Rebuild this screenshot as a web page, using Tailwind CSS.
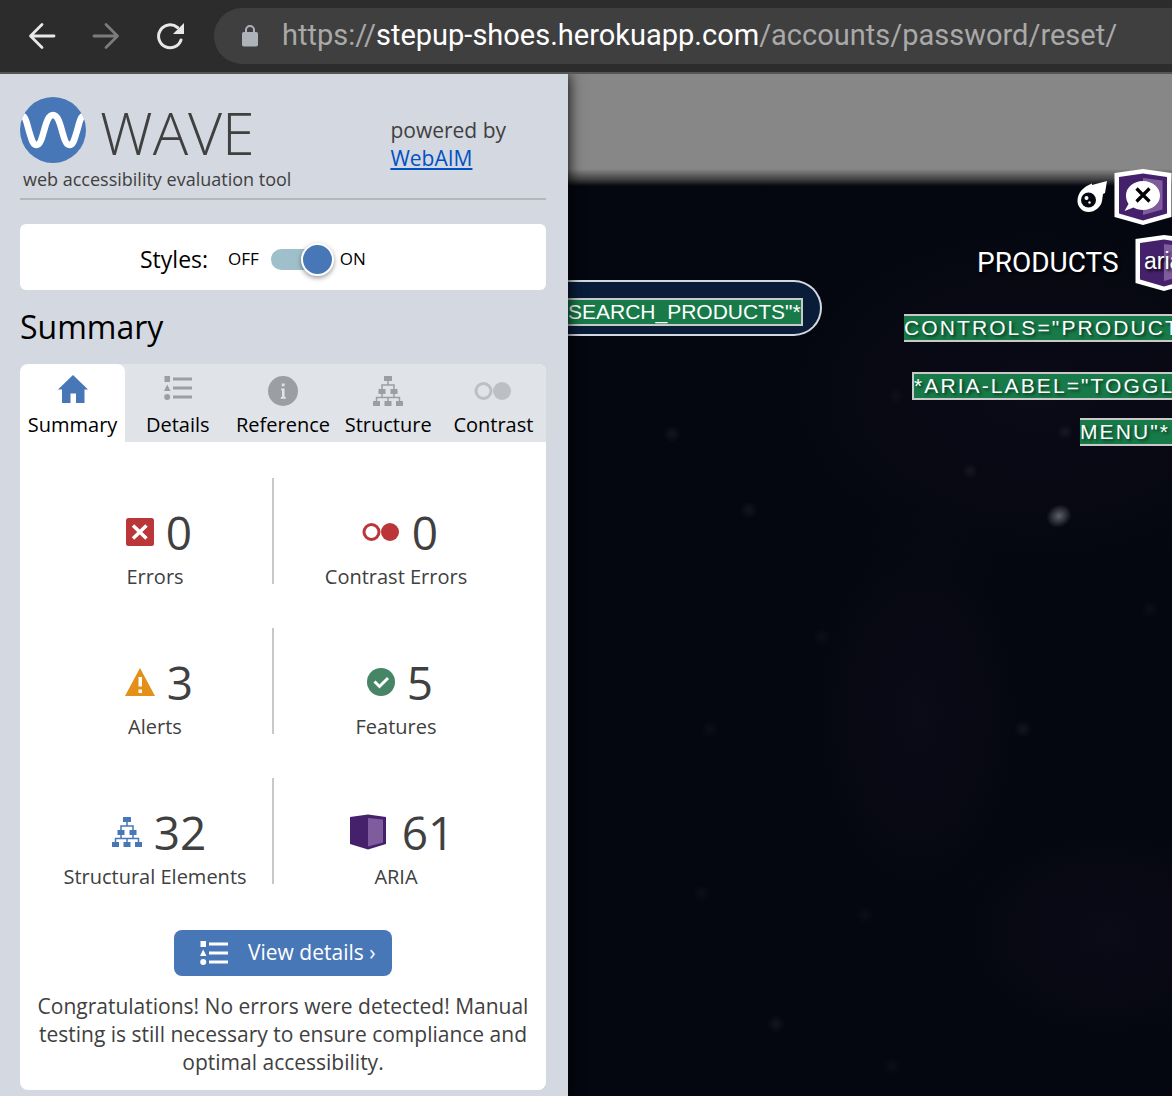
<!DOCTYPE html>
<html lang="en">
<head>
<meta charset="utf-8">
<meta name="viewport" content="width=device-width, initial-scale=1">
<title>WAVE report - stepup-shoes</title>
<script src="https://cdn.jsdelivr.net/npm/@tailwindcss/browser@4"></script>
</head>
<body class="flex min-h-screen flex-col bg-[#04070f] font-['Open_Sans',sans-serif] text-[#404040]">
<svg class="hidden" aria-hidden="true">
  <symbol id="tree" viewBox="0 0 30 30"><path d="M11 0h8v5h-8zM5.500 13h7v5h-7zM17.500 13h7v5h-7zM0 25h7v5H0zM11.500 25h7v5h-7zM23 25h7v5h-7z" fill="currentColor"/><path d="M15 5v4M9 13V9h12v4M9 18v3.500M21 18v3.500M3.500 25v-3.500h23V25M15 25v-3.500" fill="none" stroke="currentColor" stroke-width="1.500"/></symbol>
  <symbol id="list" viewBox="0 0 28 24"><path d="M.500 0H6v6H.500zM3.200 8.500l3.300 6.500H0z" fill="currentColor"/><circle cx="3.200" cy="21" r="3" fill="currentColor"/><path d="M9 3h19M9 12h19M9 21h19" stroke="currentColor" stroke-width="2.800"/></symbol>
  <symbol id="circles" viewBox="0 0 38 20"><circle cx="9.500" cy="10" r="7.500" fill="none" stroke="currentColor" stroke-width="3"/><circle cx="28" cy="10" r="9" fill="currentColor"/></symbol>
  <symbol id="cube" viewBox="0 0 58 58"><path d="M29 1L57.500 5v44L29 57 .500 49V5z" fill="#fff"/><path d="M29 5.500L53 9v36.500L29 52.500 5 45.500V9z" fill="#46216b"/><path d="M29 10l19.500 2.500v29L29 47z" fill="#7f5c9d"/></symbol>
</svg>

<header class="z-20 flex h-[74px] shrink-0 items-center border-b-2 border-[#555] bg-[#2c2c2c]">
  <nav class="flex gap-9 pl-7" aria-label="Browser">
    <button aria-label="Back" class="size-7 text-[#e8e8e8]"><svg viewBox="0 0 28 28" fill="none" stroke="currentColor" stroke-width="2.800" stroke-linecap="round" stroke-linejoin="round"><path d="M26 14H3M14 2.500L2.500 14 14 25.500"/></svg></button>
    <button aria-label="Forward" class="size-7 text-[#7c7c7c]"><svg viewBox="0 0 28 28" fill="none" stroke="currentColor" stroke-width="2.800" stroke-linecap="round" stroke-linejoin="round"><path d="M2 14h23M14 2.500L25.500 14 14 25.500"/></svg></button>
    <button aria-label="Reload" class="size-7 text-[#e8e8e8]"><svg viewBox="0 0 28 28"><path d="M25 18A11.500 11.500 0 1 1 21.500 5.500" fill="none" stroke="currentColor" stroke-width="3" stroke-linecap="round"/><path d="M28 1v11H17z" fill="currentColor"/></svg></button>
  </nav>
  <div class="ml-[30px] flex h-14 min-w-0 flex-1 items-center gap-6 overflow-hidden rounded-l-full bg-[#3f3f3f] pl-7 font-[Roboto,sans-serif] text-[29px] whitespace-nowrap text-[#a9a9a9]">
    <svg class="h-[22px] w-4 shrink-0" viewBox="0 0 16 22"><rect y="7" width="16" height="14.500" rx="1.800" fill="#aeb3b9"/><path d="M4 8V5a4 4 0 0 1 8 0v3" fill="none" stroke="#aeb3b9" stroke-width="2"/></svg>
    <p>https://<span class="text-white">stepup-shoes.herokuapp.com</span>/accounts/password/reset/</p>
  </div>
</header>

<div class="flex flex-1">
  <aside class="z-10 w-[568px] shrink-0 bg-[#d4d8e0] pt-[22px] pr-[22px] pb-1.5 pl-5 shadow-[0_0_14px_#000]">
    <div class="flex h-[104px] justify-between border-b-2 border-[#b2b8ba]">
      <div>
        <div class="flex h-[68px] items-center gap-3.5">
          <svg class="size-[66px]" viewBox="0 0 66 66" role="img" aria-label="WAVE logo"><defs><clipPath id="disc"><circle cx="33" cy="33" r="33"/></clipPath></defs><circle cx="33" cy="33" r="33" fill="#4877b7"/><path clip-path="url(#disc)" d="M-1 18C6 18 6 24 9 34C12 44 13 48 16.500 48C24 48 24 18 33 18C42 18 42 48 49.500 48C53 48 54 44 57 34C60 24 60 18 67 18" fill="none" stroke="#fff" stroke-width="6.500"/></svg>
          <div class="pt-1 text-[59px] leading-none font-light">WAVE</div>
        </div>
        <p class="pl-[3px] text-[18px] leading-[30px]">web accessibility evaluation tool</p>
      </div>
      <p class="mr-10 pt-5 text-[21px] leading-7">powered by<br><a href="https://webaim.org/" class="text-[#0051c4] underline">WebAIM</a></p>
    </div>

    <div class="mt-6 flex h-[66px] items-center rounded-md bg-white pt-1 pl-[120px] text-black">
      <label for="styles" class="text-[23px]">Styles:</label>
      <span class="ml-5 text-[17px]">OFF</span>
      <input id="styles" type="checkbox" role="switch" checked class="relative mx-3 h-[21px] w-[57px] appearance-none rounded-full bg-[#9fc0ca] before:absolute before:-top-1.5 before:left-7.5 before:size-[33px] before:rounded-full before:border-2 before:border-white before:bg-[#4877b7] before:shadow-[0_2px_5px_#0006] before:content-['']">
      <span class="text-[17px]">ON</span>
    </div>

    <h1 class="py-3.5 text-[32px] leading-[46px] text-black">Summary</h1>

    <div class="overflow-hidden rounded-lg bg-white">
      <div role="tablist" class="grid h-[78px] grid-cols-5 bg-[#e0e3e8] text-[20px] leading-7 text-black">
        <button role="tab" aria-selected="true" class="flex flex-col items-center rounded-t-lg bg-white"><span class="flex h-[47px] items-center pt-1"><svg class="size-7.5" viewBox="0 0 30 30"><path d="M15 0l15 14.500h-3.500V28H18V18.500h-5.500V28H4V14.500H0z" fill="#4877b7"/></svg></span>Summary</button>
        <button role="tab" class="flex flex-col items-center"><span class="flex h-[47px] items-center text-[#9b9fa3]"><svg class="h-6 w-7"><use href="#list"/></svg></span>Details</button>
        <button role="tab" class="flex flex-col items-center"><span class="flex h-[47px] items-center pt-1.5"><svg class="size-7.5" viewBox="0 0 30 30"><circle cx="15" cy="15" r="15" fill="#9b9fa3"/><path d="M13.800 7.500h2.800v2.800h-2.800zM13 12.500h3.600V21h1.200v1.800h-5V21H14v-6.700h-1z" fill="#e0e3e8"/></svg></span>Reference</button>
        <button role="tab" class="flex flex-col items-center"><span class="flex h-[47px] items-center pt-1.5 text-[#9b9fa3]"><svg class="h-[30px] w-8"><use href="#tree"/></svg></span>Structure</button>
        <button role="tab" class="flex flex-col items-center"><span class="flex h-[47px] items-center pt-1.5 text-[#bcc0c5]"><svg class="h-5 w-[38px]"><use href="#circles"/></svg></span>Contrast</button>
      </div>

      <ul class="grid grid-cols-2 gap-y-11 pt-9 pr-8 pl-3.5 text-center text-[20px] leading-7">
        <li class="h-[106px] border-r-2 border-[#c8c8c8] pt-[30px] pl-1"><div class="flex h-12 items-center justify-center gap-3 pl-2 text-[46px] leading-[48px]"><svg class="size-7" viewBox="0 0 28 28"><rect width="28" height="28" rx="2.500" fill="#ba3638"/><path d="M7 7.500l13.500 13M20.500 7.500L7 20.500" stroke="#fff" stroke-width="3.500"/></svg>0</div><p class="mt-[7px]">Errors</p></li>
        <li class="h-[106px] pt-[30px] pl-1"><div class="flex h-12 items-center justify-center gap-3 pl-2 text-[46px] leading-[48px]"><svg class="h-5 w-[38px] text-[#ba3638]"><use href="#circles"/></svg>0</div><p class="mt-[7px]">Contrast Errors</p></li>
        <li class="h-[106px] border-r-2 border-[#c8c8c8] pt-[30px] pl-1"><div class="flex h-12 items-center justify-center gap-3 pl-2 text-[46px] leading-[48px]"><svg class="h-7 w-[30px]" viewBox="0 0 30 28"><path d="M15 0l15 28H0z" fill="#e38f18"/><path d="M13.500 9h3.500v9.500h-3.500zM13.500 21.500h3.500V25h-3.500z" fill="#fff"/></svg>3</div><p class="mt-[7px]">Alerts</p></li>
        <li class="h-[106px] pt-[30px] pl-1"><div class="flex h-12 items-center justify-center gap-3 pl-2 text-[46px] leading-[48px]"><svg class="size-7" viewBox="0 0 28 28"><circle cx="14" cy="14" r="14" fill="#468566"/><path d="M7.500 13.500l5 5 8.500-8.500" fill="none" stroke="#fff" stroke-width="3"/></svg>5</div><p class="mt-[7px]">Features</p></li>
        <li class="h-[106px] border-r-2 border-[#c8c8c8] pt-[30px] pl-1"><div class="flex h-12 items-center justify-center gap-3 pl-2 text-[46px] leading-[48px]"><svg class="size-7.5 text-[#4877b7]"><use href="#tree"/></svg>32</div><p class="mt-[7px]">Structural Elements</p></li>
        <li class="h-[106px] pt-[30px] pl-1"><div class="flex h-12 items-center justify-center gap-4 pl-3 text-[46px] leading-[48px]"><svg class="size-9" viewBox="0 0 36 36"><path d="M18 .500L36 3v27L18 35.500 0 30V3z" fill="#46216b"/><path d="M18 4l15 1.500v23L18 32.500z" fill="#7f5c9d"/></svg>61</div><p class="mt-[7px]">ARIA</p></li>
      </ul>

      <button class="mx-auto mt-[46px] flex h-[46px] w-[218px] items-center rounded-lg bg-[#4877b7] pl-6.5 text-[21px] text-white"><svg class="mr-5 h-6 w-7"><use href="#list"/></svg>View details ›</button>
      <p class="px-3 pt-4 pb-3.5 text-center text-[21px] leading-7">Congratulations! No errors were detected! Manual testing is still necessary to ensure compliance and optimal accessibility.</p>
    </div>
  </aside>

  <main class="relative min-w-0 flex-1 overflow-hidden bg-[linear-gradient(#878787_95px,#444_105px,#04070f_112px)] font-['Liberation_Sans',sans-serif] text-[21px] leading-6 whitespace-nowrap text-white">
    <svg class="absolute inset-0 size-full" viewBox="0 0 604 1022" preserveAspectRatio="xMinYMin slice" aria-hidden="true">
      <defs>
        <radialGradient id="glow"><stop stop-color="#0b0a17"/><stop offset="1" stop-color="#0b0a17" stop-opacity="0"/></radialGradient>
        <radialGradient id="star"><stop stop-color="#9a9ba8"/><stop offset="1" stop-color="#9a9ba8" stop-opacity="0"/></radialGradient>
      </defs>
      <ellipse cx="350" cy="640" rx="120" ry="210" fill="url(#glow)"/>
      <ellipse cx="470" cy="320" rx="300" ry="200" fill="url(#glow)"/>
      <ellipse cx="540" cy="860" rx="170" ry="120" fill="url(#glow)"/>
      <g fill="url(#star)">
        <ellipse cx="491" cy="442" rx="13" ry="11" transform="rotate(-30 491 442)" opacity=".6"/>
        <g opacity=".1"><circle cx="104" cy="360" r="9"/><circle cx="181" cy="436" r="9"/><circle cx="402" cy="397" r="8"/><circle cx="497" cy="358" r="8"/><circle cx="208" cy="950" r="9"/><circle cx="455" cy="655" r="9"/></g>
        <g opacity=".05"><circle cx="328" cy="322" r="8"/><circle cx="254" cy="563" r="9"/><circle cx="324" cy="992" r="9"/><circle cx="134" cy="819" r="9"/><circle cx="297" cy="841" r="9"/><circle cx="582" cy="535" r="9"/><circle cx="142" cy="655" r="9"/></g>
      </g>
    </svg>

    <div class="relative mt-[90px] flex h-[66px] items-center gap-1.5 pl-[508px]">
      <svg class="size-8 shrink-0" viewBox="0 0 32 32" role="img" aria-label="Comet"><path d="M31 0l-2 12-2 1-1 7C25 26 19 31 12.500 31A11 11 0 0 1 1.500 20C1.500 12 7 6 16 2.500V4z" fill="#fff"/><circle cx="12.500" cy="19" r="7.500" fill="#05070f"/><circle cx="10.500" cy="17" r="2" fill="#fff"/><circle cx="13.500" cy="21.500" r="1.200" fill="#fff"/></svg>
      <svg class="size-[58px] shrink-0" viewBox="0 0 58 58" role="img" aria-label="ARIA alert"><use href="#cube"/><path d="M29 13c9.500 0 17 6.500 17 14.500S38.500 42 29 42c-4 0-7-1-9.500-2.500L10.500 43l4-7C13 33.500 12 31 12 27.500 12 19.500 19.500 13 29 13z" fill="#fff"/><path d="M22.500 20.500l13 13M35.500 20.500l-13 13" stroke="#000" stroke-width="3.200"/></svg>
    </div>
    <a href="#products" class="relative flex h-[66px] items-center gap-4 pl-[409px] font-[Roboto,sans-serif] text-[28px] [text-shadow:2px_2px_3px_#000]">PRODUCTS
      <svg class="size-[58px] shrink-0" viewBox="0 0 58 58" role="img" aria-label="ARIA"><use href="#cube"/><text x="9" y="35" font-size="23" fill="#fff" font-family="Liberation Sans, sans-serif">aria</text></svg>
    </a>
    <form class="relative -mt-[16px] flex h-14 w-[254px] items-center rounded-r-full border-2 border-l-0 border-[#d4d8e0] bg-[#091c38] pt-2">
      <label for="q" class="border-2 border-l-0 border-[#c9c9c9] bg-[#177a48]">SEARCH_PRODUCTS"*</label>
      <input id="q" class="w-0 min-w-0 flex-1 bg-transparent outline-none">
    </form>
    <ul class="relative -mt-[22px] tracking-widest [text-shadow:2px_2px_3px_#0008]">
      <li class="ml-[336px] border-y-2 border-[#c9c9c9] bg-[#177a48]">CONTROLS="PRODUCT</li>
      <li class="mt-[30px] ml-[344px] border-2 border-r-0 border-[#c9c9c9] bg-[#177a48]">*ARIA-LABEL="TOGGL</li>
      <li class="mt-[18px] ml-[512px] border-y-2 border-[#c9c9c9] bg-[#177a48]">MENU"*</li>
    </ul>
  </main>
</div>
</body>
</html>
